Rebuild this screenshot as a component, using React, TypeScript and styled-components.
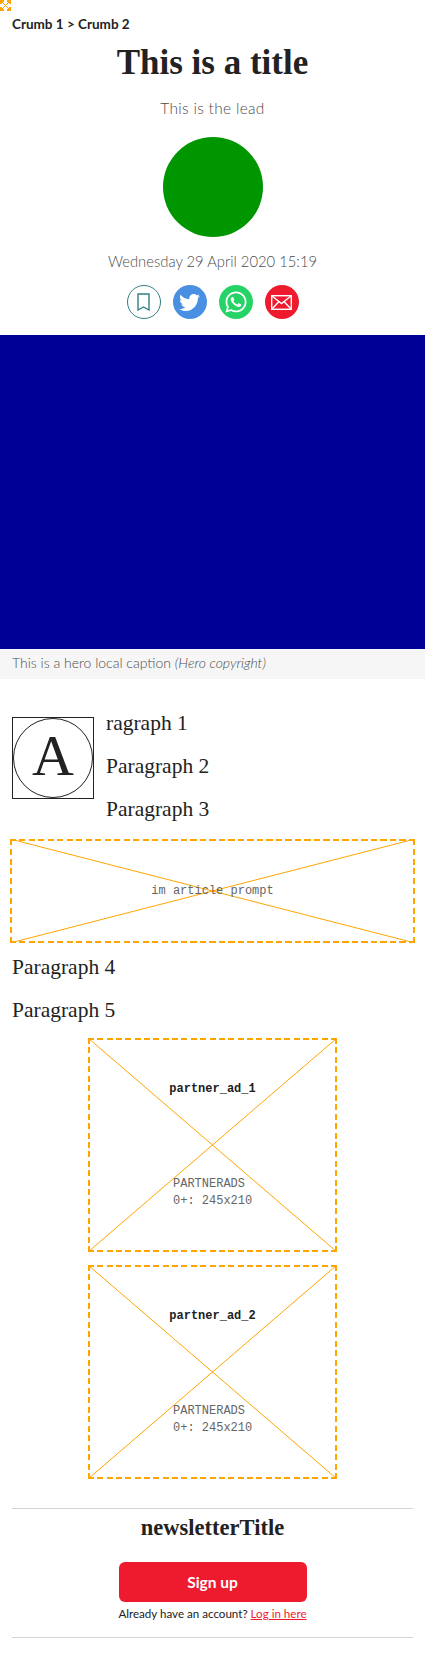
import React from "react";
import styled, { createGlobalStyle, css } from "styled-components";
import { FaTwitter, FaWhatsapp } from "react-icons/fa";

const serif = `"Liberation Serif", "DejaVu Serif", serif`;
const sans = `Lato, "Open Sans", sans-serif`;
const mono = `"Liberation Mono", monospace`;
const orange = "#ffa500";

const Global = createGlobalStyle`
  html, body { margin: 0; padding: 0; background: #fff; }
  * { box-sizing: border-box; }
`;

const Page = styled.main`
  width: 425px;
  height: 1678px;
  overflow: hidden;
  color: #222;
  font-family: ${sans};
`;

/* period of a dash run that starts and ends with a dash on a given edge */
const period = (len: number, dash: number, target: number) =>
  (len - dash) / Math.max(1, Math.round((len - dash) / target));

const stripe = (dir: string, dash: number, p: number) =>
  `repeating-linear-gradient(${dir}, ${orange} 0, ${orange} ${dash}px, transparent ${dash}px, transparent ${p}px)`;

const dashed = (w: number, h: number, dash: number, target: number) => {
  const px = period(w, dash, target);
  const py = period(h, dash, target);
  return css`
    background-image: ${stripe("to right", dash, px)}, ${stripe("to right", dash, px)},
      ${stripe("to bottom", dash, py)}, ${stripe("to bottom", dash, py)};
    background-size: 100% 2px, 100% 2px, 2px 100%, 2px 100%;
    background-position: 0 0, 0 100%, 0 0, 100% 0;
    background-repeat: no-repeat;
  `;
};

const PlaceholderBox = styled.div<{ $w: number; $h: number; $dash: number; $gap: number }>`
  position: relative;
  width: ${(p) => p.$w}px;
  height: ${(p) => p.$h}px;
  ${(p) => dashed(p.$w, p.$h, p.$dash, p.$dash + p.$gap)}
  font-family: ${mono};
  font-size: 12px;
  line-height: 17px;
  color: #666;
`;

const Cross = styled.svg`
  position: absolute;
  inset: 0;
  width: 100%;
  height: 100%;
`;

const Placeholder: React.FC<{ w: number; h: number; dash?: number; gap?: number; children?: React.ReactNode }> = ({ w, h, dash = 6, gap = 3.5, children }) => (
  <PlaceholderBox $w={w} $h={h} $dash={dash} $gap={gap}>
    <Cross viewBox="0 0 100 100" preserveAspectRatio="none">
      <line x1="0" y1="0" x2="100" y2="100" stroke={orange} strokeWidth="1" vectorEffect="non-scaling-stroke" />
      <line x1="100" y1="0" x2="0" y2="100" stroke={orange} strokeWidth="1" vectorEffect="non-scaling-stroke" />
    </Cross>
    {children}
  </PlaceholderBox>
);

const Crumbs = styled.nav`
  padding: 4px 12px 0;
  font-size: 13.5px;
  line-height: 18px;
  font-weight: 700;
  color: #222;
`;

const Header = styled.header`
  display: flex;
  flex-direction: column;
  align-items: center;
  padding: 0 12px;
`;

const Title = styled.h1`
  margin: 8px 0 0;
  font-family: ${serif};
  font-size: 35px;
  line-height: 44px;
  font-weight: 700;
  color: #222;
  text-align: center;
`;

const Lead = styled.p`
  margin: 13px 0 0;
  font-size: 15.5px;
  line-height: 20px;
  letter-spacing: 0.3px;
  font-weight: 300;
  color: #4d4d4d;
`;

const Avatar = styled.div`
  margin-top: 19px;
  width: 100px;
  height: 100px;
  border-radius: 50%;
  background: #009600;
`;

const DateLine = styled.time`
  margin-top: 14px;
  font-size: 14.8px;
  line-height: 20px;
  font-weight: 300;
  color: #4d4d4d;
`;

const Shares = styled.div`
  display: flex;
  gap: 12px;
  margin-top: 14px;
`;

const Share = styled.span<{ $bg: string }>`
  width: 34px;
  height: 34px;
  border-radius: 50%;
  background: ${(p) => p.$bg};
  color: #fff;
  display: flex;
  align-items: center;
  justify-content: center;
`;

const Save = styled(Share)`
  border: 1.5px solid #33807f;
  color: #33807f;
`;

const Hero = styled.div`
  margin-top: 16px;
  height: 314px;
  background: #000096;
`;

const Caption = styled.figcaption`
  height: 30px;
  padding: 4px 12px 0;
  background: #f6f6f6;
  font-size: 14px;
  line-height: 20px;
  font-weight: 300;
  color: #4d4d4d;
`;

const Figure = styled.figure`
  margin: 0;
`;

const Article = styled.article`
  padding: 30px 12px 0;
`;

const DropCap = styled.div`
  float: left;
  width: 82px;
  height: 82px;
  margin: 8px 12px 0 0;
  border: 1px solid #222;
  display: flex;
  align-items: center;
  justify-content: center;
`;

const CapCircle = styled.div`
  width: 80px;
  height: 80px;
  border-radius: 50%;
  border: 1px solid #222;
  font-family: ${serif};
  font-size: 58px;
  line-height: 74px;
  text-align: center;
  color: #222;
`;

const Para = styled.p`
  margin: 0 0 15px;
  font-family: ${serif};
  font-size: 21.5px;
  line-height: 28px;
  color: #222;
`;

const PromptWrap = styled.div`
  margin: 16px -2px 10px;
  clear: both;
`;

const PromptText = styled.div`
  position: absolute;
  left: 0;
  right: 0;
  top: 44px;
  text-align: center;
`;

const Ads = styled.div`
  display: flex;
  flex-direction: column;
  align-items: center;
  gap: 13px;
  margin-top: -1px;
`;

const AdName = styled.div`
  position: absolute;
  left: 0;
  right: 0;
  top: 43px;
  text-align: center;
  color: #222;
  font-weight: 700;
`;

const AdMeta = styled.div`
  position: absolute;
  left: 85px;
  top: 138px;
  white-space: pre;
`;

const Newsletter = styled.section`
  margin: 29px 12px 0;
  border-top: 1px solid #d4d4d4;
  border-bottom: 1px solid #d4d4d4;
  height: 130px;
  display: flex;
  flex-direction: column;
  align-items: center;
`;

const NewsTitle = styled.h2`
  margin: 6px 0 0;
  font-family: ${serif};
  font-size: 22.5px;
  line-height: 26px;
  font-weight: 700;
  color: #222;
`;

const SignUp = styled.button`
  margin-top: 21px;
  width: 188px;
  height: 40px;
  border: 0;
  border-radius: 6px;
  background: #ee1b2e;
  color: #fff;
  font-family: ${sans};
  font-size: 15.5px;
  font-weight: 700;
`;

const Account = styled.p`
  margin: 3px 0 0;
  font-size: 11.6px;
  line-height: 18px;
  color: #222;
`;

const Login = styled.a`
  color: #ee1b2e;
  text-decoration: underline;
`;

export default function App() {
  return (
    <Page>
      <Global />
      <Placeholder w={11} h={11} dash={4} gap={3} />
      <Crumbs>Crumb 1 &gt; Crumb 2</Crumbs>
      <Header>
        <Title>This is a title</Title>
        <Lead>This is the lead</Lead>
        <Avatar />
        <DateLine>Wednesday 29 April 2020 15:19</DateLine>
        <Shares>
          <Save $bg="#fff">
            <svg width="13" height="18" viewBox="0 0 13 18" fill="none" stroke="currentColor" strokeWidth="1.4">
              <path d="M1 1h11v16l-5.5-3L1 17z" />
            </svg>
          </Save>
          <Share $bg="#4a90e2"><FaTwitter size={21} /></Share>
          <Share $bg="#25d366"><FaWhatsapp size={24} /></Share>
          <Share $bg="#ee1b2e">
            <svg width="21" height="15" viewBox="0 0 21 15" fill="none" stroke="currentColor" strokeWidth="1.4">
              <rect x="0.7" y="0.7" width="19.6" height="13.6" />
              <path d="M1 1l9.5 7.5L20 1M1 14l7-7.5M20 14l-7-7.5" />
            </svg>
          </Share>
        </Shares>
      </Header>
      <Figure>
        <Hero />
        <Caption>This is a hero local caption <em>(Hero copyright)</em></Caption>
      </Figure>
      <Article>
        <DropCap><CapCircle>A</CapCircle></DropCap>
        <Para>ragraph 1</Para>
        <Para>Paragraph 2</Para>
        <Para>Paragraph 3</Para>
        <PromptWrap>
          <Placeholder w={405} h={104}>
            <PromptText>im article prompt</PromptText>
          </Placeholder>
        </PromptWrap>
        <Para>Paragraph 4</Para>
        <Para>Paragraph 5</Para>
        <Ads>
          <Placeholder w={249} h={214}>
            <AdName>partner_ad_1</AdName>
            <AdMeta>{"PARTNERADS\n0+: 245x210"}</AdMeta>
          </Placeholder>
          <Placeholder w={249} h={214}>
            <AdName>partner_ad_2</AdName>
            <AdMeta>{"PARTNERADS\n0+: 245x210"}</AdMeta>
          </Placeholder>
        </Ads>
      </Article>
      <Newsletter>
        <NewsTitle>newsletterTitle</NewsTitle>
        <SignUp>Sign up</SignUp>
        <Account>Already have an account? <Login href="#">Log in here</Login></Account>
      </Newsletter>
    </Page>
  );
}
